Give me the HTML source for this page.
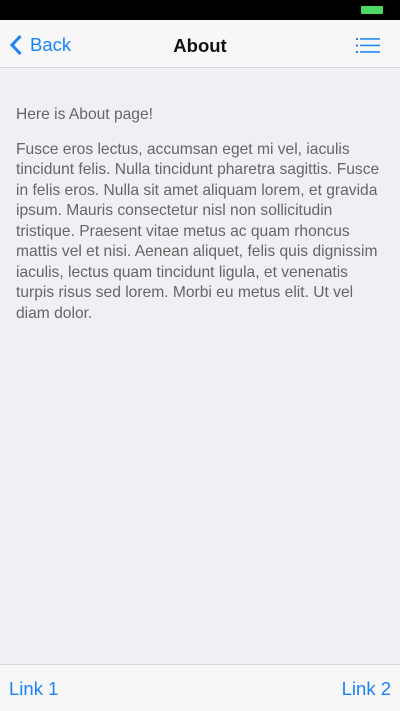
<!DOCTYPE html>
<html><head><meta charset="utf-8"><style>
*{margin:0;padding:0;box-sizing:border-box}
body{width:400px;height:711px;overflow:hidden;background:#efeff4;font-family:"Liberation Sans",sans-serif;position:relative}
.sb{position:absolute;top:0;left:0;width:400px;height:20px;background:#000}
.bat{position:absolute;right:17px;top:6px;width:22px;height:8px;background:#4cd964;border-radius:1px}
.nav{position:absolute;top:20px;left:0;width:400px;height:48px;background:#f7f7f7;border-bottom:1px solid #d8d8dc}
.back{position:absolute;left:9px;top:14px;color:#1a82fb;font-size:18.5px;display:flex;align-items:center}
.title{position:absolute;left:0;right:0;top:15px;text-align:center;font-size:18.5px;font-weight:bold;color:#111}
.menu{position:absolute;right:20px;top:18px}
.content{position:absolute;top:105px;left:16px;color:#666;font-size:15.6px;line-height:20.5px;white-space:nowrap}
.tb{position:absolute;left:0;bottom:0;width:400px;height:47px;background:#f7f7f7;border-top:1px solid #d8d8dc}
.tb span{position:absolute;top:13px;color:#1a82fb;font-size:18.5px}
</style></head><body>
<div class="sb"><div class="bat"></div></div>
<div class="nav">
<div class="back"><svg width="14" height="22" viewBox="0 0 14 22"><path d="M11.5 2 L3 11 L11.5 20" fill="none" stroke="#1a82fb" stroke-width="3"/></svg><span style="margin-left:7px">Back</span></div>
<div class="title">About</div>
<svg class="menu" width="24" height="15" viewBox="0 0 24 15"><g fill="#1a82fb"><rect x="0" y="0" width="2" height="2"/><rect x="4" y="0.2" width="20" height="1.5"/><rect x="0" y="6.5" width="2" height="2"/><rect x="4" y="6.7" width="20" height="1.5"/><rect x="0" y="13" width="2" height="2"/><rect x="4" y="13.2" width="20" height="1.5"/></g></svg>
</div>
<div class="content">Here is About page!<div style="height:14px"></div>Fusce eros lectus, accumsan eget mi vel, iaculis<br>tincidunt felis. Nulla tincidunt pharetra sagittis. Fusce<br>in felis eros. Nulla sit amet aliquam lorem, et gravida<br>ipsum. Mauris consectetur nisl non sollicitudin<br>tristique. Praesent vitae metus ac quam rhoncus<br>mattis vel et nisi. Aenean aliquet, felis quis dignissim<br>iaculis, lectus quam tincidunt ligula, et venenatis<br>turpis risus sed lorem. Morbi eu metus elit. Ut vel<br>diam dolor.</div>
<div class="tb"><span style="left:9px">Link 1</span><span style="right:9px">Link 2</span></div>
</body></html>
